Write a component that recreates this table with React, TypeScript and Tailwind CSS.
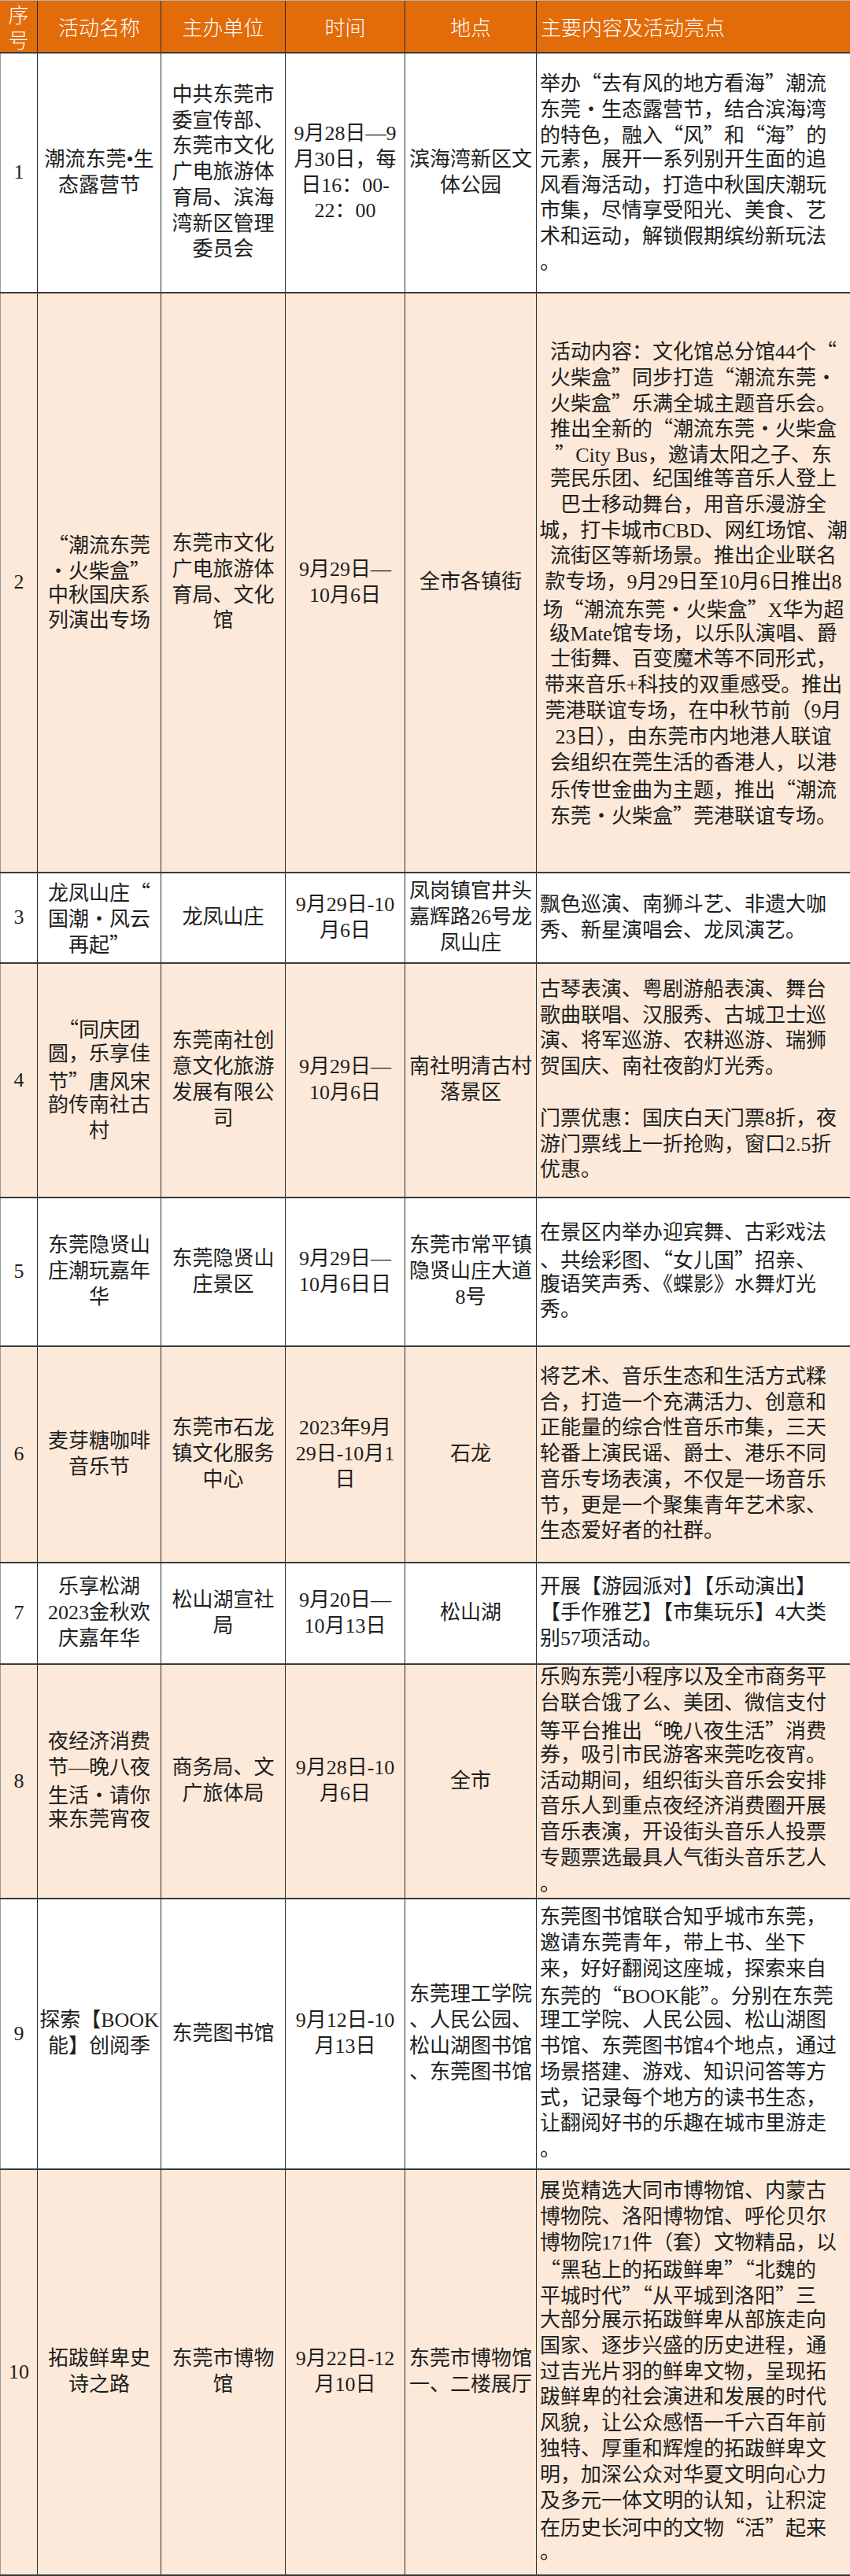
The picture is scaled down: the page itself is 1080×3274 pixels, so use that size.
type Row = {
  no: string;
  h: string;
  bg: string;
  name: string[];
  org: string[];
  time: string[];
  place: string[];
  desc: string[];
  center?: boolean;
};

const WHITE = "bg-white";
const PEACH = "bg-[#fde9d9]";

const rows: Row[] = [
  {
    no: "1",
    h: "h-[305px]",
    bg: WHITE,
    name: ["潮流东莞•生", "态露营节"],
    org: ["中共东莞市", "委宣传部、", "东莞市文化", "广电旅游体", "育局、滨海", "湾新区管理", "委员会"],
    time: ["9月28日—9", "月30日，每", "日16：00-", "22：00"],
    place: ["滨海湾新区文", "体公园"],
    desc: [
      "举办“去有风的地方看海”潮流",
      "东莞·生态露营节，结合滨海湾",
      "的特色，融入“风”和“海”的",
      "元素，展开一系列别开生面的追",
      "风看海活动，打造中秋国庆潮玩",
      "市集，尽情享受阳光、美食、艺",
      "术和运动，解锁假期缤纷新玩法",
      "。",
    ],
  },
  {
    no: "2",
    h: "h-[737px]",
    bg: PEACH,
    name: ["“潮流东莞", "·火柴盒”", "中秋国庆系", "列演出专场"],
    org: ["东莞市文化", "广电旅游体", "育局、文化", "馆"],
    time: ["9月29日—", "10月6日"],
    place: ["全市各镇街"],
    center: true,
    desc: [
      "活动内容：文化馆总分馆44个“",
      "火柴盒”同步打造“潮流东莞·",
      "火柴盒”乐满全城主题音乐会。",
      "推出全新的“潮流东莞·火柴盒",
      "”City Bus，邀请太阳之子、东",
      "莞民乐团、纪国维等音乐人登上",
      "巴士移动舞台，用音乐漫游全",
      "城，打卡城市CBD、网红场馆、潮",
      "流街区等新场景。推出企业联名",
      "款专场，9月29日至10月6日推出8",
      "场“潮流东莞·火柴盒”X华为超",
      "级Mate馆专场，以乐队演唱、爵",
      "士街舞、百变魔术等不同形式，",
      "带来音乐+科技的双重感受。推出",
      "莞港联谊专场，在中秋节前（9月",
      "23日），由东莞市内地港人联谊",
      "会组织在莞生活的香港人，以港",
      "乐传世金曲为主题，推出“潮流",
      "东莞·火柴盒”莞港联谊专场。",
    ],
  },
  {
    no: "3",
    h: "h-[115px]",
    bg: WHITE,
    name: ["龙凤山庄“", "国潮·风云", "再起”"],
    org: ["龙凤山庄"],
    time: ["9月29日-10", "月6日"],
    place: ["凤岗镇官井头", "嘉辉路26号龙", "凤山庄"],
    desc: ["飘色巡演、南狮斗艺、非遗大咖", "秀、新星演唱会、龙凤演艺。"],
  },
  {
    no: "4",
    h: "h-[298px]",
    bg: PEACH,
    name: ["“同庆团", "圆，乐享佳", "节”唐风宋", "韵传南社古", "村"],
    org: ["东莞南社创", "意文化旅游", "发展有限公", "司"],
    time: ["9月29日—", "10月6日"],
    place: ["南社明清古村", "落景区"],
    desc: [
      "古琴表演、粤剧游船表演、舞台",
      "歌曲联唱、汉服秀、古城卫士巡",
      "演、将军巡游、农耕巡游、瑞狮",
      "贺国庆、南社夜韵灯光秀。",
      "",
      "门票优惠：国庆白天门票8折，夜",
      "游门票线上一折抢购，窗口2.5折",
      "优惠。",
    ],
  },
  {
    no: "5",
    h: "h-[189px]",
    bg: WHITE,
    name: ["东莞隐贤山", "庄潮玩嘉年", "华"],
    org: ["东莞隐贤山", "庄景区"],
    time: ["9月29日—", "10月6日日"],
    place: ["东莞市常平镇", "隐贤山庄大道", "8号"],
    desc: [
      "在景区内举办迎宾舞、古彩戏法",
      "、共绘彩图、“女儿国”招亲、",
      "腹语笑声秀、《蝶影》水舞灯光",
      "秀。",
    ],
  },
  {
    no: "6",
    h: "h-[275px]",
    bg: PEACH,
    name: ["麦芽糖咖啡", "音乐节"],
    org: ["东莞市石龙", "镇文化服务", "中心"],
    time: ["2023年9月", "29日-10月1", "日"],
    place: ["石龙"],
    desc: [
      "将艺术、音乐生态和生活方式糅",
      "合，打造一个充满活力、创意和",
      "正能量的综合性音乐市集，三天",
      "轮番上演民谣、爵士、港乐不同",
      "音乐专场表演，不仅是一场音乐",
      "节，更是一个聚集青年艺术家、",
      "生态爱好者的社群。",
    ],
  },
  {
    no: "7",
    h: "h-[129px]",
    bg: WHITE,
    name: ["乐享松湖", "2023金秋欢", "庆嘉年华"],
    org: ["松山湖宣社", "局"],
    time: ["9月20日—", "10月13日"],
    place: ["松山湖"],
    desc: ["开展【游园派对】【乐动演出】", "【手作雅艺】【市集玩乐】4大类", "别57项活动。"],
  },
  {
    no: "8",
    h: "h-[298px]",
    bg: PEACH,
    name: ["夜经济消费", "节—晚八夜", "生活·请你", "来东莞宵夜"],
    org: ["商务局、文", "广旅体局"],
    time: ["9月28日-10", "月6日"],
    place: ["全市"],
    desc: [
      "乐购东莞小程序以及全市商务平",
      "台联合饿了么、美团、微信支付",
      "等平台推出“晚八夜生活”消费",
      "券，吸引市民游客来莞吃夜宵。",
      "活动期间，组织街头音乐会安排",
      "音乐人到重点夜经济消费圈开展",
      "音乐表演，开设街头音乐人投票",
      "专题票选最具人气街头音乐艺人",
      "。",
    ],
  },
  {
    no: "9",
    h: "h-[344px]",
    bg: WHITE,
    name: ["探索【BOOK", "能】创阅季"],
    org: ["东莞图书馆"],
    time: ["9月12日-10", "月13日"],
    place: ["东莞理工学院", "、人民公园、", "松山湖图书馆", "、东莞图书馆"],
    desc: [
      "东莞图书馆联合知乎城市东莞，",
      "邀请东莞青年，带上书、坐下",
      "来，好好翻阅这座城，探索来自",
      "东莞的“BOOK能”。分别在东莞",
      "理工学院、人民公园、松山湖图",
      "书馆、东莞图书馆4个地点，通过",
      "场景搭建、游戏、知识问答等方",
      "式，记录每个地方的读书生态，",
      "让翻阅好书的乐趣在城市里游走",
      "。",
    ],
  },
  {
    no: "10",
    h: "h-[516px]",
    bg: PEACH,
    name: ["拓跋鲜卑史", "诗之路"],
    org: ["东莞市博物", "馆"],
    time: ["9月22日-12", "月10日"],
    place: ["东莞市博物馆", "一、二楼展厅"],
    desc: [
      "展览精选大同市博物馆、内蒙古",
      "博物院、洛阳博物馆、呼伦贝尔",
      "博物院171件（套）文物精品，以",
      "“黑毡上的拓跋鲜卑”“北魏的",
      "平城时代”“从平城到洛阳”三",
      "大部分展示拓跋鲜卑从部族走向",
      "国家、逐步兴盛的历史进程，通",
      "过吉光片羽的鲜卑文物，呈现拓",
      "跋鲜卑的社会演进和发展的时代",
      "风貌，让公众感悟一千六百年前",
      "独特、厚重和辉煌的拓跋鲜卑文",
      "明，加深公众对华夏文明向心力",
      "及多元一体文明的认知，让积淀",
      "在历史长河中的文物“活”起来",
      "。",
    ],
  },
];

// quotes and middle dots take the full-width CJK glyphs, as in the source sheet
function Text({ s }: { s: string }) {
  const parts = s.split(/([“”·])/);
  return (
    <>
      {parts.map((p, i) =>
        p === "“" || p === "”" || p === "·" ? (
          <span key={i} className="font-['Noto_Sans_CJK_SC',sans-serif]">
            {p}
          </span>
        ) : (
          p
        )
      )}
    </>
  );
}

function Lines({ lines }: { lines: string[] }) {
  return (
    <>
      {lines.map((l, i) => (
        <div key={i} className="h-[32.8px] whitespace-nowrap">
          <Text s={l} />
        </div>
      ))}
    </>
  );
}

const cell =
  "flex flex-col items-center justify-center text-center border-r border-[#2b2b2b]";

export default function App() {
  return (
    <div
      lang="zh-CN"
      className="w-[1080px] border-t border-[#b5b5b5] bg-white font-['Liberation_Serif','Noto_Sans_CJK_SC',serif] text-[26px] leading-[32.8px] text-[#1e1e1e]"
    >
      <div className="grid h-[67px] grid-cols-[48px_157px_158px_152px_167px_398px] border-b-2 border-[#3a3a3a] bg-[#e26b0a] font-['Noto_Sans_CJK_SC',sans-serif] text-[26px] font-light leading-[32px] text-white">
        <div className="flex flex-col items-center justify-center border-r border-[#2b2b2b]">
          <span>序</span>
          <span>号</span>
        </div>
        <div className="flex items-center justify-center border-r border-[#2b2b2b]">活动名称</div>
        <div className="flex items-center justify-center border-r border-[#2b2b2b]">主办单位</div>
        <div className="flex items-center justify-center border-r border-[#2b2b2b]">时间</div>
        <div className="flex items-center justify-center border-r border-[#2b2b2b]">地点</div>
        <div className="flex items-center pl-[5px]">主要内容及活动亮点</div>
      </div>

      {rows.map((r) => (
        <div
          key={r.no}
          className={`grid grid-cols-[48px_157px_158px_152px_167px_398px] border-b-2 border-[#3a3a3a] ${r.h} ${r.bg}`}
        >
          <div className={`${cell} border-l border-l-[#9a9a9a]`}>{r.no}</div>
          <div className={cell}>
            <Lines lines={r.name} />
          </div>
          <div className={cell}>
            <Lines lines={r.org} />
          </div>
          <div className={cell}>
            <Lines lines={r.time} />
          </div>
          <div className={cell}>
            <Lines lines={r.place} />
          </div>
          {r.center ? (
            <div className="flex flex-col items-center justify-center text-center">
              <Lines lines={r.desc} />
            </div>
          ) : (
            <div className="flex flex-col items-start justify-center pl-[4px] text-left">
              <Lines lines={r.desc} />
            </div>
          )}
        </div>
      ))}
    </div>
  );
}
